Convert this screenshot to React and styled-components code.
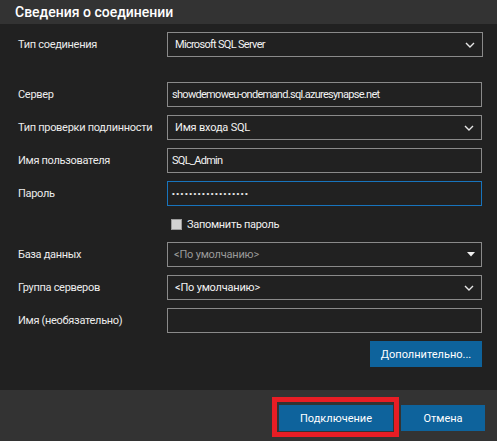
import React from 'react';
import styled, { createGlobalStyle } from 'styled-components';

const GlobalStyle = createGlobalStyle`
    html, body {
        margin: 0;
        padding: 0;
        background: #212121;
    }
    * {
        box-sizing: border-box;
    }
`;

const Dialog = styled.div`
    width: 497px;
    height: 441px;
    display: flex;
    flex-direction: column;
    background: #212121;
    color: #f0f0f0;
    font-family: Roboto, "Noto Sans", sans-serif;
    font-size: 11px;
`;

const Header = styled.div`
    height: 24px;
    background: #333333;
    display: flex;
    align-items: center;
    padding-left: 15px;
    font-size: 14px;
    font-weight: 500;
    color: #ffffff;
`;

const Body = styled.div`
    flex: 1;
    display: flex;
    flex-direction: column;
    gap: 8px;
    padding: 8px 15px 0 18px;
`;

const Row = styled.div`
    display: grid;
    grid-template-columns: 149px 1fr;
    align-items: center;
    height: ${(p) => p.$h || 25}px;
    margin-top: ${(p) => p.$top || 0}px;
`;

const Label = styled.div`
    color: #ececec;
    white-space: nowrap;
    letter-spacing: -0.3px;
`;

const Field = styled.div`
    height: 25px;
    border: 1px solid ${(p) => (p.$focused ? '#1874bd' : '#8a8a8a')};
    display: flex;
    align-items: center;
    padding: 0 ${(p) => (p.$pad || 4)}px;
    margin-right: ${(p) => (p.$wide ? -1 : 0)}px;
    color: ${(p) => (p.$muted ? '#9a9a9a' : '#f2f2f2')};
    white-space: nowrap;
    overflow: hidden;
`;

const Value = styled.span`
    flex: 1;
    letter-spacing: ${(p) => (p.$latin ? -0.7 : -0.2)}px;
`;

const Dots = styled.span`
    font-family: "Liberation Sans", sans-serif;
    font-size: 8px;
    letter-spacing: 1.5px;
    color: #e8e8e8;
`;

const CheckRow = styled.div`
    grid-column: 2;
    display: flex;
    align-items: center;
    gap: 5px;
    padding-left: 4px;
    letter-spacing: -0.3px;
`;

const Box = styled.span`
    width: 11px;
    height: 11px;
    background: #d2d2d2;
    border: 1px solid #9c9c9c;
`;

const ButtonRow = styled.div`
    grid-column: 2;
    display: flex;
    justify-content: flex-end;
`;

const Button = styled.button`
    height: 26px;
    width: ${(p) => p.$w}px;
    background: #0e639c;
    border: none;
    color: #ffffff;
    font-family: inherit;
    font-size: 11px;
    padding: 0;
    position: relative;
`;

const Footer = styled.div`
    height: 51px;
    background: #333333;
    display: flex;
    justify-content: flex-end;
    gap: 8px;
    padding: 15px 12px 0 0;
`;

const Highlight = styled.span`
    position: absolute;
    top: -8px;
    bottom: -6px;
    left: -7px;
    right: -6px;
    border: 5px solid #e81d25;
    pointer-events: none;
`;

const Chevron = () => (
    <svg width="10" height="6" viewBox="0 0 10 6">
        <path d="M1 1l4 4 4-4" fill="none" stroke="#e6e6e6" strokeWidth="1.4" />
    </svg>
);

const Caret = () => (
    <svg width="8" height="5" viewBox="0 0 8 5">
        <path d="M0 0h8l-4 4.5z" fill="#f0f0f0" />
    </svg>
);

const App = () => {
    return (
        <Dialog>
            <GlobalStyle />
            <Header>Сведения о соединении</Header>
            <Body>
                <Row>
                    <Label>Тип соединения</Label>
                    <Field $pad={7} $wide>
                        <Value $latin>Microsoft SQL Server</Value>
                        <Chevron />
                    </Field>
                </Row>
                <Row $top={17}>
                    <Label>Сервер</Label>
                    <Field>
                        <Value $latin>showdemoweu-ondemand.sql.azuresynapse.net</Value>
                    </Field>
                </Row>
                <Row>
                    <Label>Тип проверки подлинности</Label>
                    <Field $pad={7}>
                        <Value>Имя входа SQL</Value>
                        <Chevron />
                    </Field>
                </Row>
                <Row>
                    <Label>Имя пользователя</Label>
                    <Field>
                        <Value $latin>SQL_Admin</Value>
                    </Field>
                </Row>
                <Row>
                    <Label>Пароль</Label>
                    <Field $focused>
                        <Dots>••••••••••••••••••</Dots>
                    </Field>
                </Row>
                <Row $h={20}>
                    <CheckRow>
                        <Box />
                        Запомнить пароль
                    </CheckRow>
                </Row>
                <Row>
                    <Label>База данных</Label>
                    <Field $muted $pad={6}>
                        <Value>&lt;По умолчанию&gt;</Value>
                        <Caret />
                    </Field>
                </Row>
                <Row>
                    <Label>Группа серверов</Label>
                    <Field $pad={7}>
                        <Value>&lt;По умолчанию&gt;</Value>
                        <Chevron />
                    </Field>
                </Row>
                <Row>
                    <Label>Имя (необязательно)</Label>
                    <Field />
                </Row>
                <Row $h={26}>
                    <ButtonRow>
                        <Button $w={112}>Дополнительно...</Button>
                    </ButtonRow>
                </Row>
            </Body>
            <Footer>
                <Button $w={114}>
                    Подключение
                    <Highlight />
                </Button>
                <Button $w={84}>Отмена</Button>
            </Footer>
        </Dialog>
    );
};

export default App;
